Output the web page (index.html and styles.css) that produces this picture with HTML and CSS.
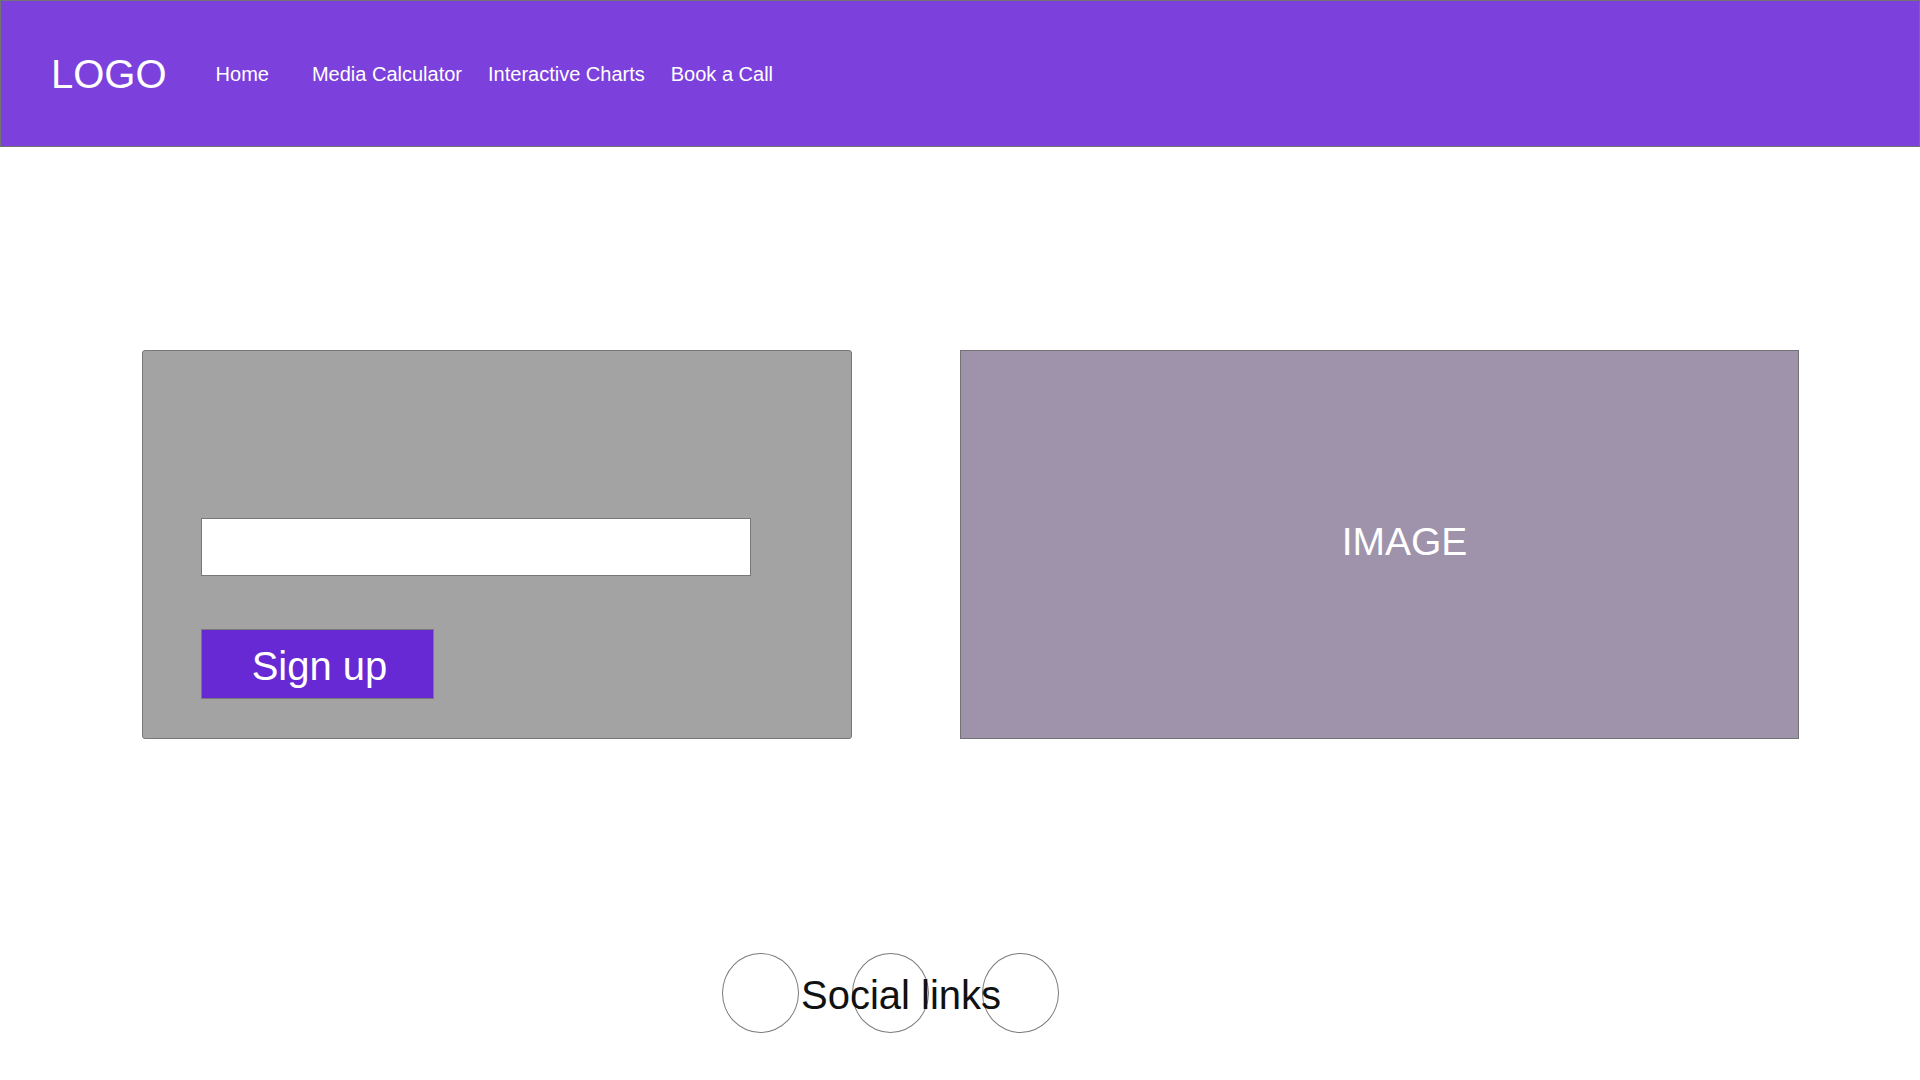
FILE: index.html
```html
<!DOCTYPE html>
<html lang="en">
<head>
<meta charset="utf-8">
<title>Landing</title>
<link rel="stylesheet" href="styles.css">
</head>
<body>
<header class="topbar">
  <div class="logo">LOGO</div>
  <nav class="nav">
    <a class="nav-link nav-home" href="#">Home</a>
    <a class="nav-link" href="#">Media Calculator</a>
    <a class="nav-link" href="#">Interactive Charts</a>
    <a class="nav-link" href="#">Book a Call</a>
  </nav>
</header>
<main class="hero">
  <section class="signup-card">
    <input class="email-input" type="text" aria-label="Email">
    <button class="signup-btn" type="button">Sign up</button>
  </section>
  <section class="image-box"><span class="image-label">IMAGE</span></section>
</main>
<footer class="social">
  <div class="social-circles">
    <span class="circle"></span>
    <span class="circle"></span>
    <span class="circle"></span>
  </div>
  <div class="social-label">Social links</div>
</footer>
</body>
</html>
```
FILE: styles.css
```css
* { box-sizing: border-box; }
html, body { margin: 0; padding: 0; }
body {
  font-family: "Liberation Sans", Arial, Helvetica, sans-serif;
  background: #ffffff;
  color: #111111;
  width: 1920px;
  height: 1080px;
  overflow: hidden;
}
.topbar {
  height: 147px;
  background: #7c41dc;
  border: 1px solid #727272;
  display: flex;
  align-items: center;
  padding-left: 50px;
}
.logo {
  color: #ffffff;
  font-size: 40px;
  line-height: 1;
  margin-right: 49px;
}
.nav {
  display: flex;
  align-items: center;
  gap: 26px;
}
.nav-link {
  color: #ffffff;
  font-size: 20px;
  text-decoration: none;
  line-height: 1;
}
.nav-home { margin-right: 17px; }
.hero {
  display: flex;
  gap: 108px;
  padding: 203px 0 0 142px;
}
.signup-card {
  width: 710px;
  height: 389px;
  background: #a3a3a3;
  border: 1px solid #777777;
  border-radius: 3px;
  padding: 167px 0 0 58px;
  display: flex;
  flex-direction: column;
  align-items: flex-start;
}
.email-input {
  width: 550px;
  height: 58px;
  background: #ffffff;
  border: 1px solid #777777;
  border-radius: 0;
  margin: 0;
  padding: 0 10px;
  font-family: inherit;
  font-size: 18px;
}
.signup-btn {
  margin-top: 53px;
  width: 233px;
  height: 70px;
  background: #6629d3;
  border: 1px solid #7a7a7a;
  border-radius: 0;
  color: #ffffff;
  font-family: inherit;
  font-size: 40px;
  line-height: 1;
  padding: 3px 0 0 4px;
  cursor: pointer;
}
.image-box {
  width: 839px;
  height: 389px;
  background: #9f92ab;
  border: 1px solid #737373;
  display: flex;
  align-items: center;
  justify-content: center;
  padding: 0 0 6px 50px;
}
.image-label {
  color: #ffffff;
  font-size: 39px;
  line-height: 1;
}
.social {
  display: grid;
  width: 338px;
  margin: 214px 0 0 722px;
}
.social-circles, .social-label {
  grid-area: 1 / 1;
}
.social-circles {
  display: flex;
  gap: 53px;
}
.circle {
  width: 77px;
  height: 80px;
  border: 1px solid #7a7a7a;
  border-radius: 50%;
}
.social-label {
  justify-self: center;
  align-self: center;
  margin-left: 20px;
  font-size: 40px;
  line-height: 1;
  color: #111111;
  padding-top: 3px;
}
```
